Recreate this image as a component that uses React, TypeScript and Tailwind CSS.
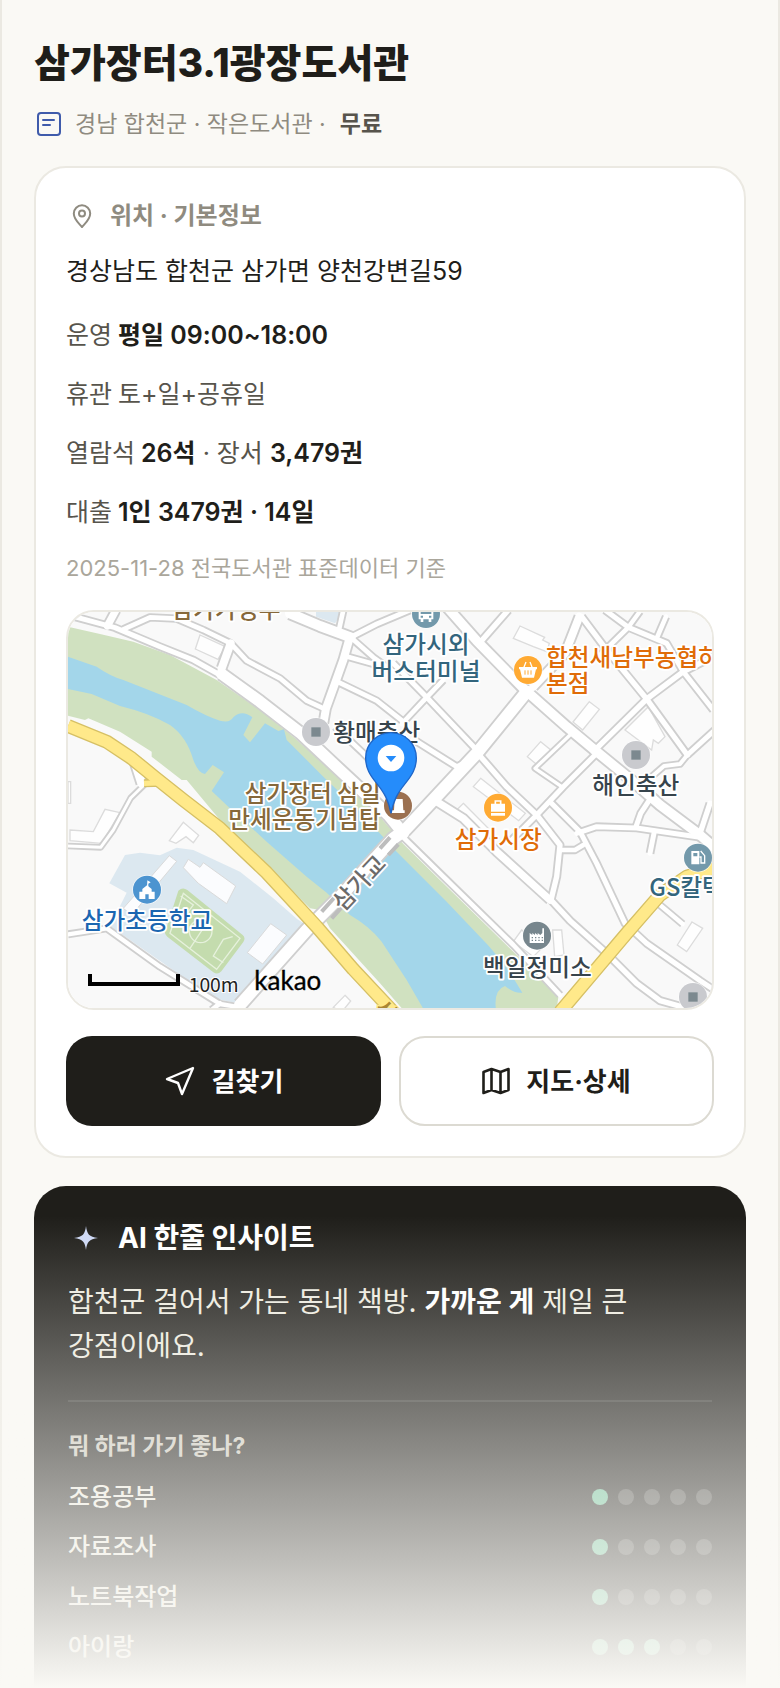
import type { ReactNode } from 'react';

type Road = { d: string; w: number };

const roads: Road[] = [
  { d: 'M24 45 L165 83 L300 140 L400 180 L480 225', w: 15 },
  { d: 'M485 222 L600 305 L720 398 L850 520 L985 645 L1030 700', w: 34 },
  { d: 'M1030 712 L1140 820 L1360 1035 L1500 1185', w: 14 },
  { d: 'M540 1215 L740 990 L850 880 L1000 715 L1035 690 L1110 610 L1250 460 L1400 275', w: 36 },
  { d: 'M1160 20 L1250 122 L1390 265 L1520 380 L1610 455 L1720 545 L1800 615 L1920 705 L1960 740', w: 28 },
  { d: 'M1345 30 L1262 125', w: 16 },
  { d: 'M690 40 L780 78 L872 112', w: 30 },
  { d: 'M872 112 L950 72 L1050 30', w: 15 },
  { d: 'M870 110 L850 180 L825 250 L798 325 L790 370', w: 24 },
  { d: 'M850 30 L838 85', w: 14 },
  { d: 'M512 130 L485 205', w: 24 },
  { d: 'M190 88 L270 52 L350 56 L430 90 L512 130 L560 182 L660 235 L740 302 L790 325', w: 14 },
  { d: 'M168 30 L142 78', w: 22 },
  { d: 'M872 112 L940 172 L1000 215', w: 14 },
  { d: 'M855 168 L960 197', w: 14 },
  { d: 'M838 248 L950 302 L1030 365', w: 14 },
  { d: 'M1000 190 L1100 292 L1250 450', w: 15 },
  { d: 'M1025 372 L1100 292 L1150 240', w: 14 },
  { d: 'M825 380 L905 455 L980 530', w: 14 },
  { d: 'M1060 418 L1190 500 L1235 480', w: 15 },
  { d: 'M1558 50 L1515 160 L1420 260', w: 24 },
  { d: 'M1565 50 L1640 150 L1760 297 L1882 465', w: 16 },
  { d: 'M1600 455 L1760 297 L1870 215 L1960 170', w: 16 },
  { d: 'M1635 30 L1705 82 L1820 130 L1870 215 L1960 330', w: 15 },
  { d: 'M1705 82 L1615 170', w: 14 },
  { d: 'M1705 82 L1740 34', w: 13 },
  { d: 'M1790 115 L1818 50', w: 14 },
  { d: 'M1882 465 L1965 390', w: 15 },
  { d: 'M1882 465 L1860 492 L1812 498 L1775 530 L1750 560', w: 12 },
  { d: 'M1262 470 L1340 560 L1430 645 L1500 735 L1490 830 L1473 900 L1530 962 L1640 1060 L1730 1150 L1800 1202 L1900 1230', w: 16 },
  { d: 'M1130 605 L1210 655 L1310 755 L1470 900', w: 22 },
  { d: 'M1605 465 L1510 560 L1430 645 L1345 730', w: 15 },
  { d: 'M1530 405 L1425 505 L1505 560', w: 10 },
  { d: 'M1470 605 L1560 695 L1610 790 L1695 970 L1760 1030 L1920 1142 L1970 1175', w: 15 },
  { d: 'M1550 700 L1610 680 L1730 684 L1920 712', w: 15 },
  { d: 'M1728 680 L1742 640 L1765 605', w: 15 },
  { d: 'M1782 700 L1770 760', w: 15 },
  { d: 'M1505 750 L1545 750 L1570 735', w: 14 },
  { d: 'M1920 700 L1950 610', w: 16 },
  { d: 'M1800 915 L1868 972', w: 13 },
  { d: 'M24 1003 L140 985 L300 1100 L480 1212 L540 1222', w: 13 },
  { d: 'M24 738 L122 742 L160 690 L212 594 L255 552', w: 9 },
  { d: 'M225 488 L245 550', w: 26 },
  { d: 'M455 1230 L480 1210', w: 14 },
];

const buildings = [
  'M420 105 L496 140 L474 178 L406 147 Z',
  'M1380 78 L1454 112 L1448 120 L1468 130 L1460 155 L1420 140 L1360 115 Z',
  'M1588 305 L1618 328 L1568 390 L1539 366 Z',
  'M1765 320 L1815 410 L1795 430 L1780 420 L1775 450 L1695 390 Z',
  'M1442 425 L1475 452 L1438 500 L1402 470 Z',
  'M1262 535 L1396 640 L1376 662 L1240 560 Z',
  'M1210 610 L1290 690 L1270 710 L1190 630 Z',
  'M30 690 L100 695 L135 628 L180 638 L125 730 L30 722 Z',
  'M370 667 L416 706 L400 728 L378 710 L348 730 L328 722 Z',
  'M1478 990 L1505 990 L1512 1065 L1484 1070 Z',
  'M1385 990 L1360 1025 L1420 1070 L1450 1040 Z',
  'M1896 966 L1928 985 L1880 1055 L1852 1035 Z',
  'M855 1186 L872 1203 L845 1236 L820 1222 Z',
  'M24 545 L32 545 L32 610 L24 610 Z',
];

const yellowRoads: Road[] = [
  { d: 'M24 378 L140 425 L215 475 L285 532 L370 600 L480 685 L620 818 L770 980 L880 1108 L1000 1236', w: 34 },
  { d: 'M252 550 L310 548 L400 625', w: 16 },
  { d: 'M1500 1236 L1700 1000 L1800 885 L1880 830 L1960 805', w: 34 },
];

type Place = {
  lines: string[];
  x: number;
  y: number;
  fill: string;
  anchor: 'start' | 'middle' | 'end';
};

const places: Place[] = [
  { lines: ['삼가가정부'], x: 498, y: 54, fill: '#86683a', anchor: 'middle' },
  { lines: ['삼가시외', '버스터미널'], x: 1098, y: 160, fill: '#33657d', anchor: 'middle' },
  { lines: ['합천새남부농협하나로', '본점'], x: 1458, y: 197, fill: '#e06c08', anchor: 'start' },
  { lines: ['황매축산'], x: 820, y: 424, fill: '#37444c', anchor: 'start' },
  { lines: ['해인축산'], x: 1727, y: 582, fill: '#37444c', anchor: 'middle' },
  { lines: ['삼가장터 삼일', '만세운동기념탑'], x: 962, y: 605, fill: '#86683a', anchor: 'end' },
  { lines: ['삼가시장'], x: 1315, y: 743, fill: '#e06c08', anchor: 'middle' },
  { lines: ['GS칼텍스'], x: 1768, y: 889, fill: '#33657d', anchor: 'start' },
  { lines: ['백일정미소'], x: 1432, y: 1127, fill: '#37444c', anchor: 'middle' },
  { lines: ['삼가초등학교'], x: 261, y: 988, fill: '#1b66b1', anchor: 'middle' },
];

function Marker({ x, y, fill, children }: { x: number; y: number; fill: string; children: ReactNode }) {
  return (
    <g transform={`translate(${x} ${y})`}>
      <circle r="44" fill="#ffffff" opacity="0.7" />
      <circle r="42" fill={fill} />
      {children}
    </g>
  );
}

function LibraryMap() {
  return (
    <svg
      viewBox="24 36 1932 1188"
      className="block h-auto w-full"
      role="img"
      aria-label="삼가장터3.1광장도서관 지도"
      fontFamily="'Noto Sans CJK KR', sans-serif"
    >
      <rect x="24" y="36" width="1932" height="1188" fill="#f9f9f9" />
      <path d="M768 36 H850 L825 70 L768 50 Z" fill="#dce8f0" />

      {/* school grounds */}
      <path
        d="M195 765 L240 758 L300 766 L350 743 L400 750 L540 815 L640 895 L712 958 L740 975 L525 1208 L460 1195 L150 978 L200 878 L148 850 Z"
        fill="#dce8f0"
      />
      <path d="M355 872 Q368 860 382 870 L548 1005 Q558 1014 550 1026 L484 1114 Q473 1126 460 1117 L322 1010 Q310 1000 318 988 Z" fill="#c4dcae" />
      <g fill="none" stroke="#e6f1dc" strokeWidth="4">
        <path d="M370 880 L540 1015 L470 1108 L330 1000 Z" />
        <path d="M456 945 L390 1045 M362 888 L400 915 L360 968 M518 1010 L490 1018 L460 1068 L490 1088" />
        <circle cx="422" cy="994" r="34" />
      </g>
      <g fill="#fbfcfe" stroke="#dadada" strokeWidth="3">
        <path d="M328 767 L350 784 L215 945 L190 925 Z" />
        <path d="M385 778 L420 802 L430 788 L527 858 L500 911 L415 850 L370 803 Z" />
        <path d="M632 971 L680 1005 L608 1092 L562 1058 Z" />
      </g>

      {/* river banks and water */}
      <path
        d="M24 80 L120 102 L220 125 L330 165 L470 240 L600 330 L700 410 L850 545 L960 650 L1030 732 L1140 840 L1360 1055 L1495 1190 L1490 1230 L1030 1230 L960 1150 L810 985 L780 930 L750 925 L480 660 L380 540 L365 540 L275 470 L275 455 L180 395 L85 355 L75 360 L24 347 Z"
        fill="#d0e1c0"
      />
      <path
        d="M24 170 L110 200 Q150 228 190 240 L380 315 Q440 350 480 362 Q510 370 520 352 Q545 328 577 352 L550 405 L570 427 L615 370 L655 393 L672 388 L680 420 L790 530 L900 635 L1010 755 L1160 905 L1260 1010 Q1330 1080 1387 1178 Q1365 1182 1335 1158 Q1300 1170 1308 1230 L1092 1230 L1040 1140 L965 1025 Q930 980 870 945 L800 878 L740 830 L620 725 L505 620 L455 573 L492 517 L458 495 L435 522 Q415 520 400 480 Q380 410 330 375 Q270 340 180 318 L95 282 L24 267 Z"
        fill="#a3d6ea"
      />

      <g fill="#fefefe" stroke="#dcdcdc" strokeWidth="4">
        {buildings.map((d) => (
          <path key={d} d={d} />
        ))}
      </g>

      <g fill="none" stroke="#cfcfcf" strokeLinejoin="round">
        {roads.map((r) => (
          <path key={r.d} d={r.d} strokeWidth={r.w + 11} />
        ))}
      </g>
      <g fill="none" stroke="#ffffff" strokeLinejoin="round" strokeLinecap="round">
        {roads.map((r) => (
          <path key={r.d} d={r.d} strokeWidth={r.w} />
        ))}
      </g>
      <path d="M785 935 L830 885 M960 745 L990 712 M815 955 L860 905 M985 765 L1015 733" stroke="#bdbdbd" strokeWidth="12" />

      <g fill="none" stroke="#d6c065" strokeLinejoin="round">
        {yellowRoads.map((r) => (
          <path key={r.d} d={r.d} strokeWidth={r.w + 8} />
        ))}
      </g>
      <g fill="none" stroke="#ffe98a" strokeLinejoin="round">
        {yellowRoads.map((r) => (
          <path key={r.d} d={r.d} strokeWidth={r.w} />
        ))}
      </g>

      <Marker x={1098} y={42} fill="#7399ab">
        <path fill="#fff" d="M-22 -24 H22 V16 H16 V24 H8 V16 H-8 V24 H-16 V16 H-22 Z" />
        <path fill="#7399ab" d="M-16 -18 H16 V0 H-16 Z M-16 5 h7 v6 h-7 Z M9 5 h7 v6 h-7 Z" />
      </Marker>
      <Marker x={1404} y={210} fill="#ffaa33">
        <path fill="none" stroke="#fff" strokeWidth="4" d="M-14 -4 L-6 -24 M14 -4 L6 -24" />
        <path fill="#fff" d="M-27 -9 H27 V-2 H24 L18 23 H-18 L-24 -2 H-27 Z" />
        <path stroke="#ffaa33" strokeWidth="3" d="M-9 1 V14 M0 1 V14 M9 1 V14" />
      </Marker>
      <Marker x={768} y={396} fill="#c9cace">
        <rect x="-14" y="-14" width="28" height="28" fill="#7c898f" />
      </Marker>
      <Marker x={1728} y={465} fill="#c9cace">
        <rect x="-14" y="-14" width="28" height="28" fill="#7c898f" />
      </Marker>
      <Marker x={1899} y={1191} fill="#c9cace">
        <rect x="-14" y="-14" width="28" height="28" fill="#7c898f" />
      </Marker>
      <Marker x={1314} y={623} fill="#ffaa33">
        <path fill="none" stroke="#fff" strokeWidth="5" d="M-8 -10 V-20 H8 V-10" />
        <path fill="#fff" d="M-21 -12 H21 V12 H-21 Z M-21 16 H21 V24 H-21 Z" />
      </Marker>
      <Marker x={1014} y={617} fill="#9b7050">
        <path fill="#fff" d="M-10 -20 H14 L16 14 H20 V22 H-20 V14 H-12 Z" />
      </Marker>
      <Marker x={1914} y={773} fill="#7399ab">
        <path fill="#fff" d="M-20 -20 H4 V20 H-20 Z" />
        <path fill="#7399ab" d="M-14 -14 H-2 V-4 H-14 Z" />
        <path fill="none" stroke="#fff" strokeWidth="4" d="M4 -2 H9 V16 H20 V-6 L8 -20" />
      </Marker>
      <Marker x={1431} y={1007} fill="#77868d">
        <path fill="#fff" d="M-22 22 V-8 L-14 -2 V-8 L-6 -2 V-8 L2 -2 V-8 L10 -2 L16 -8 V-22 H21 V22 Z" />
        <path stroke="#77868d" strokeWidth="4" strokeDasharray="4 6" d="M-16 6 H18 M-16 14 H18" />
      </Marker>
      <Marker x={261} y={869} fill="#4c94d0">
        <path fill="#fff" d="M-23 28 V6 H-14 V-2 L0 -13 L14 -2 V6 H23 V28 H5 V14 H-5 V28 Z" />
        <path fill="#fff" d="M1 -28 L11 -22 L4 -18 V-8 H0 Z" />
      </Marker>

      <g fontSize="71" fontWeight="500" stroke="#ffffff" strokeWidth="11" strokeLinejoin="round" paintOrder="stroke">
        {places.map((p) => (
          <text key={p.lines[0]} textAnchor={p.anchor} fill={p.fill}>
            {p.lines.map((line, i) => (
              <tspan key={line} x={p.x} y={p.y + i * 80}>
                {line}
              </tspan>
            ))}
          </text>
        ))}
        <text transform="translate(916 866) rotate(-47)" textAnchor="middle" fill="#6b6b6b">
          삼가교
        </text>
      </g>
      <text transform="translate(944 1226) rotate(45)" fontSize="60" fontWeight="700" fill="#a98634" stroke="#ffe98a" strokeWidth="8" paintOrder="stroke">
        서
      </text>

      {/* library pin */}
      <path
        d="M993 640 C985 600 974 580 950 550 C930 526 917 505 917 474 A76 76 0 0 1 1069 474 C1069 505 1056 526 1036 550 C1012 580 1001 600 993 640 Z"
        fill="#258cfb"
        stroke="#1f66c8"
        strokeWidth="4"
      />
      <circle cx="993" cy="474" r="40" fill="#fff" />
      <path d="M977 468 H1009 L993 486 Z" fill="#258cfb" />

      {/* scale bar */}
      <path d="M90 1122 V1152 H354 V1122" fill="none" stroke="#000" strokeWidth="12" />
      <text x="386" y="1176" fontSize="58" fill="#222" stroke="#fff" strokeWidth="6" paintOrder="stroke">
        100m
      </text>
      <text x="583" y="1170" fontSize="78" fontFamily="Lato, sans-serif" fill="#000" stroke="#000" strokeWidth="1">
        kakao
      </text>
    </svg>
  );
}

const moods = [
  { label: '조용공부', score: 1 },
  { label: '자료조사', score: 1 },
  { label: '노트북작업', score: 1 },
  { label: '아이랑', score: 3 },
];

function Dots({ score }: { score: number }) {
  return (
    <span className="flex gap-[10px]" role="img" aria-label={`5점 중 ${score}점`}>
      {[1, 2, 3, 4, 5].map((n) => (
        <span key={n} className={n <= score ? 'size-4 rounded-full bg-[#68bd94]' : 'size-4 rounded-full bg-white/20'} />
      ))}
    </span>
  );
}

export default function App() {
  return (
    <div className="relative flex min-h-screen flex-col border-x-2 border-[#ebe9e2] bg-[#faf9f5] px-8 pt-8 font-['Inter','Noto_Sans_CJK_KR',sans-serif] text-[#1f1e1a]">
      <header>
        <h1 className="text-[39px] leading-[62px] font-extrabold">삼가장터3.1광장도서관</h1>
        <p className="mt-[10px] flex h-10 items-center text-[23px] text-[#8f8b80]">
          <svg viewBox="0 0 24 24" className="ml-[3px] size-6" fill="none" stroke="#3f5bab" strokeWidth="2" strokeLinecap="round" aria-hidden="true">
            <rect x="1" y="1" width="22" height="22" rx="3" />
            <path d="M6 8H17 M6 13H13" />
          </svg>
          <span className="ml-[14px]">경남 합천군 · 작은도서관 ·</span>
          <b className="ml-[14px] font-semibold text-[#57544c]">무료</b>
        </p>
      </header>

      <section className="mt-[22px] rounded-[32px] border-2 border-[#ebe9e2] bg-white px-[30px] pt-7 pb-[30px]">
        <h2 className="flex h-10 items-center text-2xl font-bold text-[#8f8b80]">
          <svg viewBox="0 0 24 24" className="ml-1 size-6" fill="none" stroke="currentColor" strokeWidth="2" aria-hidden="true">
            <path d="M12 23 C9 19.500 3.800 15.500 3.800 9.500 a8.200 8.200 0 0 1 16.400 0 C20.200 15.500 15 19.500 12 23 Z" />
            <circle cx="12" cy="9.500" r="3" />
          </svg>
          <span className="ml-4">위치 · 기본정보</span>
        </h2>
        <p className="mt-[14px] text-[25px] leading-[42px]">경상남도 합천군 삼가면 양천강변길59</p>
        <dl className="mt-[14px] text-[25px] leading-[59px] text-[#57544c] [&_b]:text-[#1f1e1a]">
          <div className="flex gap-[6px]">
            <dt>운영</dt>
            <dd><b className="font-semibold">평일 09:00~18:00</b></dd>
          </div>
          <div className="flex gap-[6px]">
            <dt>휴관</dt>
            <dd>토+일+공휴일</dd>
          </div>
          <div className="flex gap-[6px]">
            <dt>열람석</dt>
            <dd><b className="font-semibold">26석</b> · 장서 <b className="font-semibold">3,479권</b></dd>
          </div>
          <div className="flex gap-[6px]">
            <dt>대출</dt>
            <dd><b className="font-semibold">1인 3479권 · 14일</b></dd>
          </div>
        </dl>
        <p className="mt-1 text-[22px] leading-[44px] text-[#aaa69b]">2025-11-28 전국도서관 표준데이터 기준</p>
        <div className="mt-5 overflow-hidden rounded-[28px] border-2 border-[#ebe9e2]">
          <LibraryMap />
        </div>
        <div className="mt-[26px] grid grid-cols-2 gap-[18px] text-[26px] font-bold">
          <button type="button" className="flex h-[90px] items-center justify-center gap-4 rounded-[26px] bg-[#1f1e1a] text-white">
            <svg viewBox="0 0 32 32" className="size-8" fill="none" stroke="currentColor" strokeWidth="2.400" strokeLinejoin="round" aria-hidden="true">
              <path d="M29 3 L3 14 L14 18 L18 29 Z" />
            </svg>
            길찾기
          </button>
          <button type="button" className="flex h-[90px] items-center justify-center gap-4 rounded-[26px] border-2 border-[#dcdad2] bg-white">
            <svg viewBox="0 0 28 28" className="size-7" fill="none" stroke="currentColor" strokeWidth="2.600" strokeLinejoin="round" aria-hidden="true">
              <path d="M1.500 5 L9.500 2 L18.500 5 L26.500 2 V23 L18.500 26 L9.500 23 L1.500 26 Z M9.500 2 V23 M18.500 5 V26" />
            </svg>
            지도·상세
          </button>
        </div>
      </section>

      <section className="mt-7 flex-1 rounded-t-[32px] bg-[#1f1e1a] px-[34px] pt-[30px] text-[#eceadf]">
        <h2 className="flex h-11 items-center text-[28px] font-bold text-white">
          <svg viewBox="0 0 24 24" className="ml-[6px] size-6" fill="#cdd8f5" aria-hidden="true">
            <path d="M12 0 C13 8 15 11 24 12 C15 13 13 16 12 24 C11 16 9 13 0 12 C9 11 11 8 12 0 Z" />
          </svg>
          <span className="ml-5">AI 한줄 인사이트</span>
        </h2>
        <p className="mt-5 max-w-[580px] text-[28px] leading-[44px]">
          합천군 걸어서 가는 동네 책방. <b className="font-bold text-white">가까운 게</b> 제일 큰 강점이에요.
        </p>
        <div className="mt-8 border-t-2 border-white/10 pt-6">
          <h3 className="text-[23px] leading-10 font-bold text-[#c9c6bb]">뭐 하러 가기 좋나?</h3>
          <ul className="mt-[6px] text-2xl font-medium">
            {moods.map((m) => (
              <li key={m.label} className="flex h-[50px] items-center justify-between">
                {m.label}
                <Dots score={m.score} />
              </li>
            ))}
          </ul>
        </div>
      </section>

      <div className="pointer-events-none absolute -inset-x-[2px] bottom-0 h-[472px] bg-linear-to-b from-[#faf9f5]/0 to-[#faf9f5]" />
    </div>
  );
}
